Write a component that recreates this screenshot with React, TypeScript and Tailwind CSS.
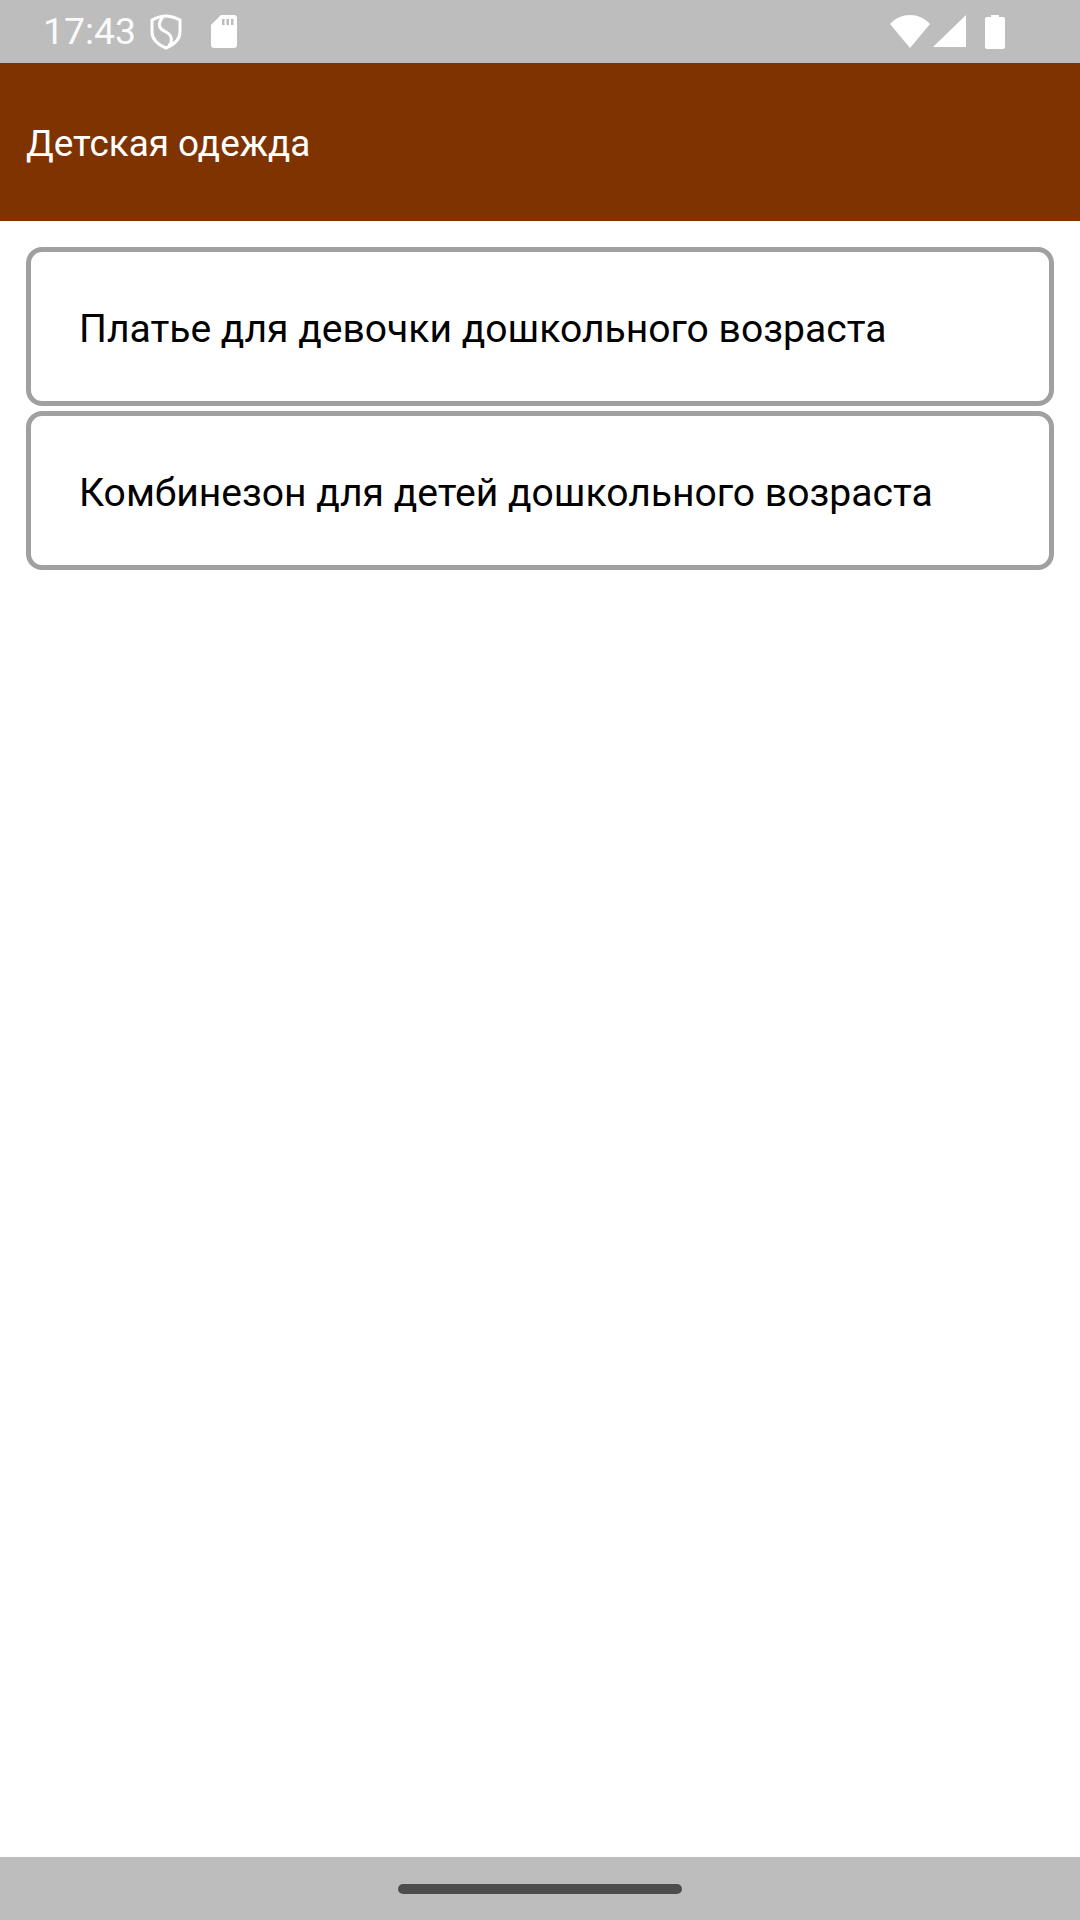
const items = ["Платье для девочки дошкольного возраста", "Комбинезон для детей дошкольного возраста"]

export default function App() {
  return (
    <div className="flex h-[1920px] w-[1080px] flex-col bg-white font-['Roboto',sans-serif]">
      {/* Status bar */}
      <div className="flex h-[63px] items-center justify-between bg-[#bdbdbd] pl-[43px] pr-[75px] text-white">
        <div className="flex items-center">
          <span className="w-[93px] text-[37.4px] leading-none text-[#fafafa]">17:43</span>
          <svg className="ml-[14px] h-[36px] w-[32px]" viewBox="0 0 32 36" fill="none" stroke="white" strokeWidth="3">
            <path d="M16 2 C20 2 26 4 30 6 V18 C30 26 23 31 16 34 C9 31 2 26 2 18 V6 C6 4 12 2 16 2 Z" />
            <path d="M13 3 C6 11 10 15 16 18 C22 21 23 27 19 32" />
          </svg>
          <svg className="ml-[29px] h-[33px] w-[26px]" viewBox="0 0 26 33" fill="white">
            <path d="M10 0 H23 A3 3 0 0 1 26 3 V30 A3 3 0 0 1 23 33 H3 A3 3 0 0 1 0 30 V10 Z" />
            <rect x="11" y="4" width="2.5" height="6" fill="#bdbdbd" />
            <rect x="15.5" y="4" width="2.5" height="6" fill="#bdbdbd" />
            <rect x="20" y="4" width="2.5" height="6" fill="#bdbdbd" />
          </svg>
        </div>
        <div className="flex items-center">
          <svg className="h-[33px] w-[40px]" viewBox="0 0 40 33" fill="white">
            <path d="M0 9 C11 -3 29 -3 40 9 L20 33 Z" />
          </svg>
          <svg className="ml-[3px] h-[33px] w-[33px]" viewBox="0 0 33 33" fill="white">
            <path d="M33 0 V32 H0 Z" />
          </svg>
          <svg className="ml-[19px] h-[34px] w-[20px]" viewBox="0 0 20 34" fill="white">
            <path d="M6 0 H14 V2 H18 A2 2 0 0 1 20 4 V32 A2 2 0 0 1 18 34 H2 A2 2 0 0 1 0 32 V4 A2 2 0 0 1 2 2 H6 Z" />
          </svg>
        </div>
      </div>

      {/* App bar */}
      <div className="flex h-[158px] items-center bg-[#7f3300] px-[26px] pt-[4px]">
        <span className="text-[36.9px] text-white">Детская одежда</span>
      </div>

      {/* List */}
      <div className="flex flex-1 flex-col gap-[5px] px-[26px] pt-[26px]">
        {items.map((item) => (
          <div key={item} className="flex h-[159px] items-center rounded-[16px] border-[5px] border-[#a0a0a0] bg-white pl-[48px] pt-[6px]">
            <span className="text-[39.1px] text-black">{item}</span>
          </div>
        ))}
      </div>

      {/* Navigation bar */}
      <div className="flex h-[63px] items-center justify-center bg-[#bdbdbd]">
        <div className="h-[10px] w-[284px] rounded-full bg-[#4d4d4d]" />
      </div>
    </div>
  )
}
